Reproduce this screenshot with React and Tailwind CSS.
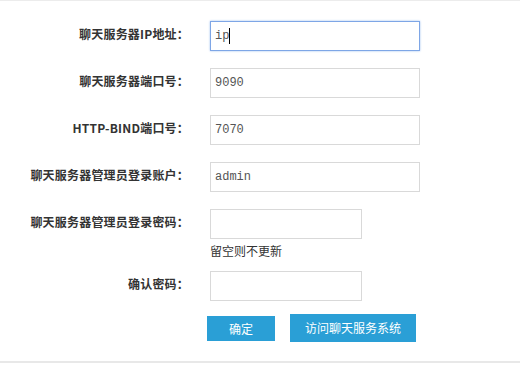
import { useState } from 'react';

const labelFont = { fontFamily: '"Microsoft YaHei", "Noto Sans CJK SC", "Noto Sans", sans-serif' };

function Field({ label, value = '', width = 'w-[210px]', focused = false, hint }) {
  return (
    <div className="flex items-start">
      <div
        className="w-[189px] shrink-0 text-right text-[12px] font-bold leading-[26px] tracking-[0.2px] text-[#333]"
        style={labelFont}
      >
        {label}
      </div>
      <div className="ml-[21px]">
        <div className="relative">
          <input
            readOnly
            defaultValue={value}
            className={`${width} h-[30px] px-[4px] text-[12px] text-[#555] outline-none ${
              focused
                ? 'border border-[#7ea6e6] shadow-[0_0_2px_#9fc0f0]'
                : 'border border-[#d9d9d9]'
            }`}
            style={{ fontFamily: '"Liberation Mono", monospace' }}
          />
          {focused && <span className="absolute left-[19px] top-[7px] h-[16px] w-px bg-black" />}
        </div>
        {hint && (
          <div className="mt-[2px] text-[12px] leading-[20px] text-[#333]" style={labelFont}>
            {hint}
          </div>
        )}
      </div>
    </div>
  );
}

export default function App() {
  const [fields] = useState([
    { label: '聊天服务器IP地址：', value: 'ip', focused: true },
    { label: '聊天服务器端口号：', value: '9090' },
    { label: 'HTTP-BIND端口号：', value: '7070' },
    { label: '聊天服务器管理员登录账户：', value: 'admin' },
    { label: '聊天服务器管理员登录密码：', value: '', width: 'w-[152px]', hint: '留空则不更新' },
    { label: '确认密码：', value: '', width: 'w-[152px]' },
  ]);

  return (
    <div className="h-[368px] w-[520px] bg-white">
      <div className="h-[363px] border-t border-[#ececec] pt-[20px] border-b-2 border-b-[#e8e8e8]">
        <div className="flex flex-col">
          {fields.map((f, i) => (
            <div key={i} className={i === 4 ? 'mb-[10px]' : i === 5 ? '' : 'mb-[17px]'}>
              <Field {...f} />
            </div>
          ))}
        </div>
        <div className="mt-[13px] flex items-start pl-[207px]" style={labelFont}>
          <button className="mt-[2px] h-[25px] w-[68px] bg-[#2a9fd6] text-[12px] text-white">确定</button>
          <button className="ml-[15px] h-[28px] w-[126px] bg-[#2a9fd6] text-[12px] text-white">
            访问聊天服务系统
          </button>
        </div>
      </div>
    </div>
  );
}
